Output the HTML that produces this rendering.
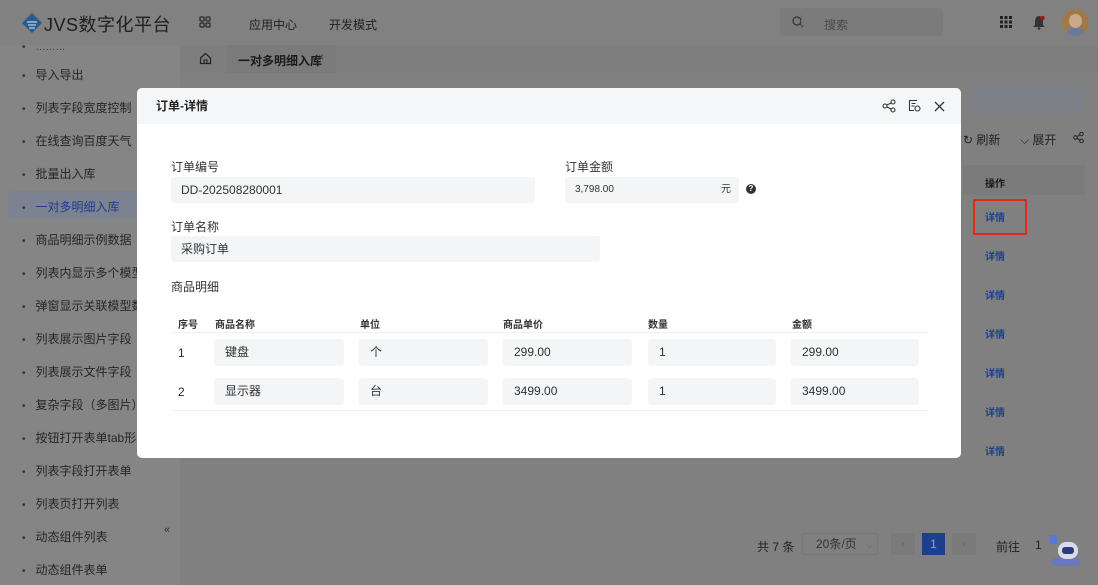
<!DOCTYPE html>
<html><head><meta charset="utf-8"><style>
*{margin:0;padding:0;box-sizing:border-box}
body{width:1098px;height:585px;overflow:hidden;background:#808080;font-family:"Liberation Sans","Noto Sans CJK SC",sans-serif;font-size:12px;color:#2a2a2a;position:relative}
.abs{position:absolute}
.hdr{left:0;top:0;width:1098px;height:45px;background:#818181}
.side{left:0;top:45px;width:180px;height:540px;background:#858585}
.side .it{position:absolute;left:22px;font-size:12px;color:#262626;white-space:nowrap}
.side .it:before{content:"•";margin-right:10px;color:#333;font-size:10px}
.tabs{left:180px;top:45px;width:918px;height:28px;background:#7e7e7e}
.modal{left:137px;top:88px;width:824px;height:370px;background:#fff;border-radius:5px;overflow:hidden}
.mh{height:36px;background:#f5f6f7;padding:0 0 0 19px;line-height:36px;font-size:12px;font-weight:bold;color:#222}
.lbl{position:absolute;font-size:12px;color:#333}
.inp{position:absolute;background:#f4f5f6;border-radius:3px;height:26px;line-height:26px;padding-left:10px;font-size:12px;color:#333}
.th{position:absolute;top:316px;font-size:10px;font-weight:bold;color:#333}
.cell{position:absolute;height:27px;line-height:27px;background:#f4f5f6;border-radius:3px;padding-left:11px;font-size:12px;color:#333}
.lk{position:absolute;left:985px;color:#1e3f8f;font-weight:bold;font-size:10px}
</style></head><body>
<div class="abs hdr"></div>
<svg class="abs" style="left:21px;top:12px" width="22" height="22" viewBox="0 0 22 22"><path d="M11 1L21 11L11 21L1 11Z" fill="#2b5a8f"/><path d="M6 10h10M7 13h8M8 16h6" stroke="#8eb0d6" stroke-width="1.8"/></svg>
<div class="abs" style="left:44px;top:11px;font-size:18px;color:#1f1f1f;letter-spacing:0.5px">JVS数字化平台</div>
<svg class="abs" style="left:199px;top:16px" width="12" height="12"><g fill="none" stroke="#2a2a2a" stroke-width="1.3"><rect x="1" y="1" width="4" height="4" rx="1"/><rect x="7" y="1" width="4" height="4" rx="1"/><rect x="1" y="7" width="4" height="4" rx="1"/><rect x="7" y="7" width="4" height="4" rx="1"/></g></svg>
<div class="abs" style="left:249px;top:16px;font-size:12px;color:#222">应用中心</div>
<div class="abs" style="left:329px;top:16px;font-size:12px;color:#222">开发模式</div>
<div class="abs" style="left:780px;top:8px;width:163px;height:28px;background:#7b7b7b;border-radius:4px"></div>
<svg class="abs" style="left:792px;top:16px" width="12" height="12"><circle cx="5" cy="5" r="4" fill="none" stroke="#333" stroke-width="1.2"/><path d="M8 8l3 3" stroke="#333" stroke-width="1.2"/></svg>
<div class="abs" style="left:801px;top:15px;width:1px;height:14px;background:#6c6c6c;left:801px"></div>
<div class="abs" style="left:824px;top:16px;color:#4a4a4a">搜索</div>
<svg class="abs" style="left:1000px;top:16px" width="12" height="12"><g fill="#222"><rect x="0" y="0" width="3" height="3"/><rect x="4.5" y="0" width="3" height="3"/><rect x="9" y="0" width="3" height="3"/><rect x="0" y="4.5" width="3" height="3"/><rect x="4.5" y="4.5" width="3" height="3"/><rect x="9" y="4.5" width="3" height="3"/><rect x="0" y="9" width="3" height="3"/><rect x="4.5" y="9" width="3" height="3"/><rect x="9" y="9" width="3" height="3"/></g></svg>
<svg class="abs" style="left:1032px;top:15px" width="14" height="15"><path d="M7 1C4 1 3 4 3 7v3L1 12h12l-2-2V7c0-3-1-6-4-6z" fill="#333"/><circle cx="7" cy="13.5" r="1.3" fill="#333"/><circle cx="10.5" cy="3" r="2.3" fill="#a01818"/></svg>
<div class="abs" style="left:1062px;top:9px;width:27px;height:27px;border-radius:50%;background:#a0794a;overflow:hidden"><div style="position:absolute;left:7px;top:5px;width:13px;height:14px;border-radius:50%;background:#c9a98a"></div><div style="position:absolute;left:5px;top:19px;width:17px;height:10px;background:#6a7a9a;border-radius:4px 4px 0 0"></div></div>
<div class="abs side">
<div class="it" style="top:-3px;color:#3a3a3a;font-size:10px">………</div>
<div class="it" style="top:21px">导入导出</div>
<div class="it" style="top:54px">列表字段宽度控制</div>
<div class="it" style="top:87px">在线查询百度天气</div>
<div class="it" style="top:120px">批量出入库</div>
<div style="position:absolute;left:8px;top:146px;width:172px;height:28px;background:#7d8290;border-radius:4px"></div>
<div class="it" style="top:153px;color:#1e3f8f">一对多明细入库</div>
<div class="it" style="top:186px">商品明细示例数据</div>
<div class="it" style="top:219px">列表内显示多个模型</div>
<div class="it" style="top:252px">弹窗显示关联模型数</div>
<div class="it" style="top:285px">列表展示图片字段</div>
<div class="it" style="top:318px">列表展示文件字段</div>
<div class="it" style="top:351px">复杂字段（多图片）</div>
<div class="it" style="top:384px">按钮打开表单tab形</div>
<div class="it" style="top:417px">列表字段打开表单</div>
<div class="it" style="top:450px">列表页打开列表</div>
<div class="it" style="top:483px">动态组件列表</div>
<div class="it" style="top:516px">动态组件表单</div>
</div>
<div class="abs" style="left:164px;top:524px;color:#333;font-size:11px">«</div>
<div class="abs tabs"></div>
<svg class="abs" style="left:199px;top:52px" width="13" height="13"><path d="M1.5 6L6.5 1.5L11.5 6V11.5H1.5Z" fill="none" stroke="#222" stroke-width="1.2"/><path d="M5 11.5V8h3v3.5" fill="none" stroke="#222" stroke-width="1.1"/></svg>
<div class="abs" style="left:226px;top:45px;width:110px;height:28px;background:#7b7b7b"></div>
<div class="abs" style="left:238px;top:52px;font-weight:bold;color:#1a1a1a">一对多明细入库</div>
<div class="abs" style="left:318px;top:52px;font-size:10px;color:#333">×</div>
<div class="abs" style="left:970px;top:85px;width:114px;height:28px;background:#7e8088;border-radius:3px"></div>
<div class="abs" style="left:963px;top:131px;color:#222">↻ 刷新</div>
<div class="abs" style="left:1020px;top:131px;color:#222">⌵ 展开</div>
<svg class="abs" style="left:1073px;top:132px" width="11" height="11"><g fill="none" stroke="#222" stroke-width="1"><circle cx="2.5" cy="5.5" r="1.8"/><circle cx="8.5" cy="2" r="1.8"/><circle cx="8.5" cy="9" r="1.8"/><path d="M4 4.7L7 2.8M4 6.3L7 8.2"/></g></svg>
<div class="abs" style="left:963px;top:165px;width:122px;height:30px;background:#7b7b7b"></div>
<div class="abs" style="left:985px;top:175px;font-weight:bold;color:#1a1a1a;font-size:10px">操作</div>
<div class="abs" style="left:973px;top:199px;width:54px;height:36px;border:2px solid #e02a1a"></div>
<div class="lk" style="top:209px">详情</div>
<div class="lk" style="top:248px">详情</div>
<div class="lk" style="top:287px">详情</div>
<div class="lk" style="top:326px">详情</div>
<div class="lk" style="top:365px">详情</div>
<div class="lk" style="top:404px">详情</div>
<div class="lk" style="top:443px">详情</div>
<div class="abs" style="left:757px;top:538px;color:#222">共 7 条</div>
<div class="abs" style="left:802px;top:533px;width:76px;height:22px;border:1px solid #787878;border-radius:2px;padding-left:13px;line-height:20px;color:#333">20条/页 <span style="margin-left:6px;font-size:9px;color:#666">⌵</span></div>
<div class="abs" style="left:891px;top:533px;width:24px;height:22px;background:#7a7a7a;color:#666;text-align:center;line-height:22px">‹</div>
<div class="abs" style="left:922px;top:533px;width:23px;height:22px;background:#1e3f8f;color:#8ea0cc;text-align:center;line-height:22px">1</div>
<div class="abs" style="left:952px;top:533px;width:24px;height:22px;background:#7a7a7a;color:#666;text-align:center;line-height:22px">›</div>
<div class="abs" style="left:996px;top:538px;color:#222">前往</div>
<div class="abs" style="left:1035px;top:538px;color:#222">1</div>
<div class="abs" style="left:1052px;top:538px;width:30px;height:28px"><div style="position:absolute;left:0;top:20px;width:28px;height:8px;background:#6a78c0;border-radius:3px"></div><div style="position:absolute;left:6px;top:4px;width:20px;height:17px;background:#d8dce8;border-radius:8px"></div><div style="position:absolute;left:10px;top:9px;width:12px;height:7px;background:#2a3a7a;border-radius:3px"></div><div style="position:absolute;left:-2px;top:-3px;width:7px;height:9px;background:#5a7ad0"></div></div>

<div class="abs modal">
<div class="mh">订单-详情</div>
<svg style="position:absolute;left:745px;top:11px" width="14" height="14"><g fill="none" stroke="#333" stroke-width="1.1"><circle cx="3" cy="7" r="2"/><circle cx="11" cy="3" r="2"/><circle cx="11" cy="11" r="2"/><path d="M4.8 6L9.2 4M4.8 8L9.2 10"/></g></svg>
<svg style="position:absolute;left:771px;top:11px" width="13" height="13"><g fill="none" stroke="#333" stroke-width="1.1"><path d="M9 1.5H1.5V11.5H6"/><path d="M3.5 4.5h4M3.5 7h3"/><circle cx="9.5" cy="9.5" r="2.5"/></g></svg>
<svg style="position:absolute;left:797px;top:13px" width="11" height="11"><path d="M1 1L10 10M10 1L1 10" stroke="#333" stroke-width="1.3"/></svg>
<div class="lbl" style="left:34px;top:70px">订单编号</div>
<div class="inp" style="left:34px;top:89px;width:364px">DD-202508280001</div>
<div class="lbl" style="left:428px;top:70px">订单金额</div>
<div class="inp" style="left:428px;top:89px;width:174px;font-size:10px">3,798.00<span style="position:absolute;right:8px">元</span></div>
<div style="position:absolute;left:609px;top:96px;width:10px;height:10px;border-radius:50%;background:#333;color:#fff;font-size:8px;line-height:10px;text-align:center;font-weight:bold">?</div>
<div class="lbl" style="left:34px;top:130px">订单名称</div>
<div class="inp" style="left:34px;top:148px;width:429px">采购订单</div>
<div class="lbl" style="left:34px;top:190px">商品明细</div>
<div style="position:absolute;left:34px;top:244px;width:757px;height:1px;background:#eef0f2"></div>
<div style="position:absolute;left:34px;top:322px;width:757px;height:1px;background:#eef0f2"></div>
</div>
<div class="th" style="left:178px">序号</div>
<div class="th" style="left:215px">商品名称</div>
<div class="th" style="left:360px">单位</div>
<div class="th" style="left:503px">商品单价</div>
<div class="th" style="left:648px">数量</div>
<div class="th" style="left:792px">金额</div>
<div class="abs" style="left:178px;top:346px">1</div>
<div class="cell" style="left:214px;top:339px;width:130px">键盘</div>
<div class="cell" style="left:359px;top:339px;width:129px">个</div>
<div class="cell" style="left:503px;top:339px;width:129px">299.00</div>
<div class="cell" style="left:648px;top:339px;width:128px">1</div>
<div class="cell" style="left:791px;top:339px;width:128px">299.00</div>
<div class="abs" style="left:178px;top:385px">2</div>
<div class="cell" style="left:214px;top:378px;width:130px">显示器</div>
<div class="cell" style="left:359px;top:378px;width:129px">台</div>
<div class="cell" style="left:503px;top:378px;width:129px">3499.00</div>
<div class="cell" style="left:648px;top:378px;width:128px">1</div>
<div class="cell" style="left:791px;top:378px;width:128px">3499.00</div>
</body></html>
